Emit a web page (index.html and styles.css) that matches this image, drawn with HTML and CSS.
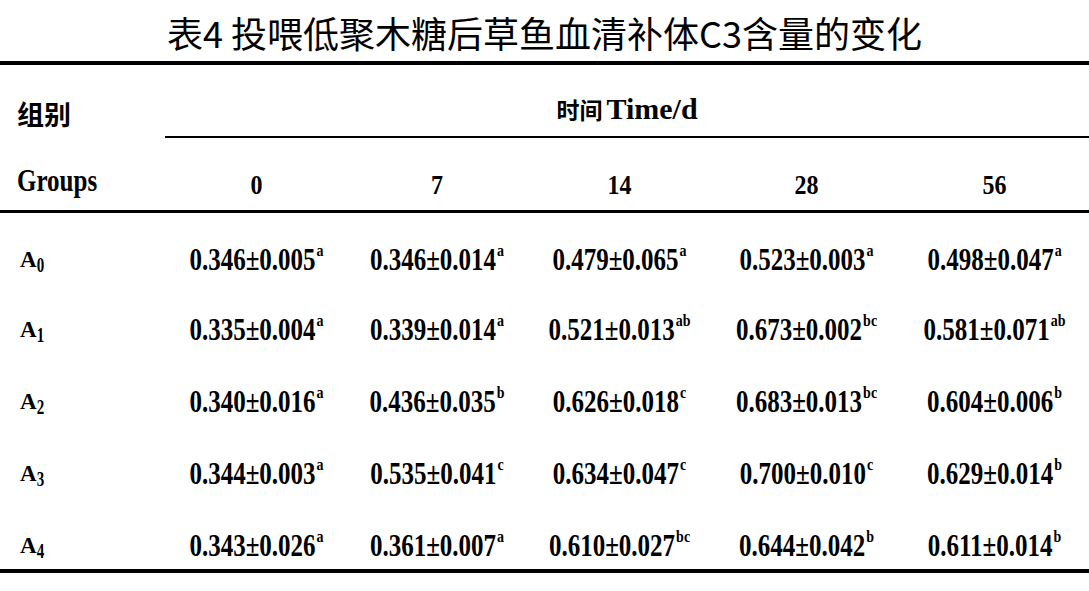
FILE: index.html
```html
<!DOCTYPE html>
<html lang="zh-CN">
<head>
<meta charset="utf-8">
<title>表4 投喂低聚木糖后草鱼血清补体C3含量的变化</title>
<link rel="stylesheet" href="styles.css">
</head>
<body>
<h1 class="title">表4 投喂低聚木糖后草鱼血清补体C3含量的变化</h1>
<table class="tbl">
  <colgroup>
    <col class="c-lbl">
    <col class="c-1">
    <col class="c-2">
    <col class="c-3">
    <col class="c-4">
    <col class="c-5">
  </colgroup>
  <thead>
    <tr class="hr1">
      <th class="lbl"><span class="cjk-lbl">组别</span></th>
      <th class="time" colspan="5"><span class="cjk-time">时间</span> <span class="time-en">Time/d</span></th>
    </tr>
    <tr class="hr2">
      <th class="lbl"><span class="groups">Groups</span></th>
      <th><span class="day">0</span></th>
      <th><span class="day">7</span></th>
      <th><span class="day">14</span></th>
      <th><span class="day">28</span></th>
      <th><span class="day">56</span></th>
    </tr>
  </thead>
  <tbody>
    <tr>
      <td class="lbl"><span class="grp">A<span class="sub">0</span></span></td>
      <td><span class="v">0.346±0.005<span class="sup">a</span></span></td>
      <td><span class="v">0.346±0.014<span class="sup">a</span></span></td>
      <td><span class="v">0.479±0.065<span class="sup">a</span></span></td>
      <td><span class="v">0.523±0.003<span class="sup">a</span></span></td>
      <td><span class="v">0.498±0.047<span class="sup">a</span></span></td>
    </tr>
    <tr>
      <td class="lbl"><span class="grp">A<span class="sub">1</span></span></td>
      <td><span class="v">0.335±0.004<span class="sup">a</span></span></td>
      <td><span class="v">0.339±0.014<span class="sup">a</span></span></td>
      <td><span class="v">0.521±0.013<span class="sup">ab</span></span></td>
      <td><span class="v">0.673±0.002<span class="sup">bc</span></span></td>
      <td><span class="v">0.581±0.071<span class="sup">ab</span></span></td>
    </tr>
    <tr>
      <td class="lbl"><span class="grp">A<span class="sub">2</span></span></td>
      <td><span class="v">0.340±0.016<span class="sup">a</span></span></td>
      <td><span class="v">0.436±0.035<span class="sup">b</span></span></td>
      <td><span class="v">0.626±0.018<span class="sup">c</span></span></td>
      <td><span class="v">0.683±0.013<span class="sup">bc</span></span></td>
      <td><span class="v">0.604±0.006<span class="sup">b</span></span></td>
    </tr>
    <tr>
      <td class="lbl"><span class="grp">A<span class="sub">3</span></span></td>
      <td><span class="v">0.344±0.003<span class="sup">a</span></span></td>
      <td><span class="v">0.535±0.041<span class="sup">c</span></span></td>
      <td><span class="v">0.634±0.047<span class="sup">c</span></span></td>
      <td><span class="v">0.700±0.010<span class="sup">c</span></span></td>
      <td><span class="v">0.629±0.014<span class="sup">b</span></span></td>
    </tr>
    <tr>
      <td class="lbl"><span class="grp">A<span class="sub">4</span></span></td>
      <td><span class="v">0.343±0.026<span class="sup">a</span></span></td>
      <td><span class="v">0.361±0.007<span class="sup">a</span></span></td>
      <td><span class="v">0.610±0.027<span class="sup">bc</span></span></td>
      <td><span class="v">0.644±0.042<span class="sup">b</span></span></td>
      <td><span class="v">0.611±0.014<span class="sup">b</span></span></td>
    </tr>
  </tbody>
</table>
</body>
</html>
```

FILE: styles.css
```css
html, body {
  margin: 0;
  padding: 0;
  background: #fff;
  color: #000;
}

body {
  width: 1089px;
  font-family: "Liberation Serif", "Times New Roman", "Noto Sans CJK SC", serif;
}

.title {
  margin: 0;
  padding: 10px 0 7px;
  font-family: "Noto Sans CJK SC", "Noto Sans", sans-serif;
  font-weight: 400;
  font-size: 36px;
  line-height: 44px;
  text-align: center;
}

.tbl {
  width: 1089px;
  table-layout: fixed;
  border-collapse: collapse;
  border-top: 4px solid #000;
  border-bottom: 4px solid #000;
}

.c-lbl { width: 165px; }
.c-1 { width: 183px; }
.c-2 { width: 178px; }
.c-3 { width: 187px; }
.c-4 { width: 187px; }
.c-5 { width: 189px; }

.tbl th,
.tbl td {
  padding: 0;
  text-align: center;
  vertical-align: top;
  white-space: nowrap;
  font-weight: 700;
}

.tbl .lbl {
  text-align: left;
  padding-left: 17px;
}

/* header row 1 */
.hr1 th {
  height: 74px;
  box-sizing: border-box;
}

.hr1 .lbl {
  padding-top: 34px;
}

.hr1 .time {
  padding-top: 29px;
  border-bottom: 2px solid #000;
}

.cjk-lbl {
  font-family: "Noto Sans CJK SC", sans-serif;
  font-weight: 700;
  font-size: 27px;
  line-height: 30px;
}

.cjk-time {
  font-family: "Noto Sans CJK SC", sans-serif;
  font-weight: 700;
  font-size: 23px;
  line-height: 30px;
}

.time-en {
  font-size: 30px;
  line-height: 30px;
}

/* header row 2 */
.hr2 th {
  height: 74px;
  box-sizing: border-box;
  padding-top: 29px;
  border-bottom: 3px solid #000;
}

.groups {
  display: inline-block;
  font-size: 25px;
  line-height: 30px;
  transform: scaleY(1.25);
}

.day {
  display: inline-block;
  font-size: 24px;
  line-height: 30px;
  transform: scaleY(1.15);
  padding-top: 3px;
}

/* body rows */
.tbl tbody td {
  height: 72px;
  box-sizing: border-box;
  padding-top: 32px;
}

.grp {
  display: inline-block;
  margin-left: 3px;
  font-size: 23px;
  line-height: 30px;
}

.sub {
  display: inline-block;
  font-size: 15px;
  line-height: 0;
  vertical-align: -3px;
  transform: scaleY(1.45);
  transform-origin: bottom;
}

.v {
  display: inline-block;
  font-size: 25px;
  line-height: 30px;
  transform: scaleY(1.25);
}

.sup {
  font-size: 14px;
  line-height: 0;
  vertical-align: 11px;
  margin-left: 1px;
}
```
